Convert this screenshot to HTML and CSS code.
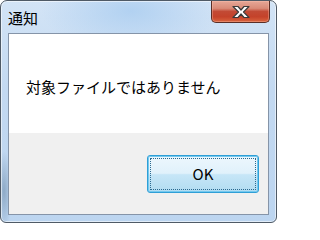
FILE: index.html
```html
<!DOCTYPE html>
<html lang="ja">
<head>
<meta charset="utf-8">
<link rel="stylesheet" href="styles.css">
</head>
<body>
<div class="window">
  <div class="titlebar">
    <span class="title">通知</span>
    <div class="close">
      <svg width="24" height="14" viewBox="0 0 24 14">
        <path d="M4 1.5 H9 L12 5 L15 1.5 H20 L14.5 7 L20 12.5 H15 L12 9 L9 12.5 H4 L9.5 7 Z" fill="#ffffff" stroke="#3a3a3a" stroke-width="1.2" stroke-linejoin="round"/>
      </svg>
    </div>
  </div>
  <div class="client">
    <div class="message">
      <p class="text">対象ファイルではありません</p>
    </div>
    <div class="actions">
      <button class="btn"><span class="focus">OK</span></button>
    </div>
  </div>
</div>
</body>
</html>
```
FILE: styles.css
```css
html, body {
  margin: 0;
  padding: 0;
  background: #ffffff;
}
body {
  width: 277px;
  height: 223px;
  overflow: hidden;
  font-family: "Noto Sans CJK JP", "Noto Sans", sans-serif;
}
.window {
  box-sizing: border-box;
  width: 277px;
  height: 223px;
  border: 1px solid #4f5a66;
  border-radius: 7px 7px 6px 6px;
  padding: 0 7px 7px 7px;
  display: flex;
  flex-direction: column;
  background:
    radial-gradient(ellipse 90px 40px at 130px 10px, rgba(170, 205, 240, 0.8), rgba(170, 205, 240, 0) 100%),
    radial-gradient(ellipse 8px 40px at 3px 190px, rgba(110, 140, 170, 0.6), rgba(110, 140, 170, 0) 100%),
    linear-gradient(to bottom, #d3e4f6 0%, #c3d9f1 40%, #bcd5f0 100%);
  box-shadow: inset 0 0 0 1px rgba(255, 255, 255, 0.55);
}
.titlebar {
  height: 32px;
  display: flex;
  justify-content: space-between;
  align-items: flex-start;
}
.title {
  font-size: 15px;
  line-height: 20px;
  color: #000000;
  margin-top: 7px;
}
.close {
  box-sizing: border-box;
  width: 59px;
  height: 22px;
  margin-top: 0;
  margin-right: -1px;
  border: 1px solid #5a2e26;
  border-top: none;
  border-radius: 0 0 5px 5px;
  background: linear-gradient(to bottom, #e6a797 0%, #d98b78 35%, #c24a35 50%, #c4422a 75%, #d9643f 100%);
  box-shadow: inset 0 0 0 1px rgba(255, 200, 180, 0.35);
  display: flex;
  align-items: center;
  justify-content: center;
}
.close svg {
  display: block;
}
.client {
  flex: 1;
  border: 1px solid #8594a8;
  display: flex;
  flex-direction: column;
  background: #f0f0f0;
}
.message {
  height: 99px;
  background: #ffffff;
  box-sizing: border-box;
  padding: 43px 0 0 17px;
}
.text {
  margin: 0;
  font-size: 15px;
  line-height: 20px;
  color: #000000;
}
.actions {
  flex: 1;
  display: flex;
  justify-content: flex-end;
  align-items: flex-start;
  padding: 22px 9px 0 0;
}
.btn {
  box-sizing: border-box;
  width: 112px;
  height: 38px;
  padding: 2px;
  border: 1px solid #2f9fd6;
  border-radius: 3px;
  background: linear-gradient(to bottom, #edf7fd 0%, #e0f1fb 48%, #c6e6f7 52%, #b1dcf1 100%);
  box-shadow: inset 0 0 0 1px #74c9ef;
  font-family: "Noto Sans CJK JP", "Noto Sans", sans-serif;
  font-size: 15px;
  color: #000000;
  display: flex;
  cursor: default;
}
.focus {
  flex: 1;
  border: 1px dotted #2a6a90;
  display: flex;
  align-items: center;
  justify-content: center;
  line-height: 20px;
}
```
